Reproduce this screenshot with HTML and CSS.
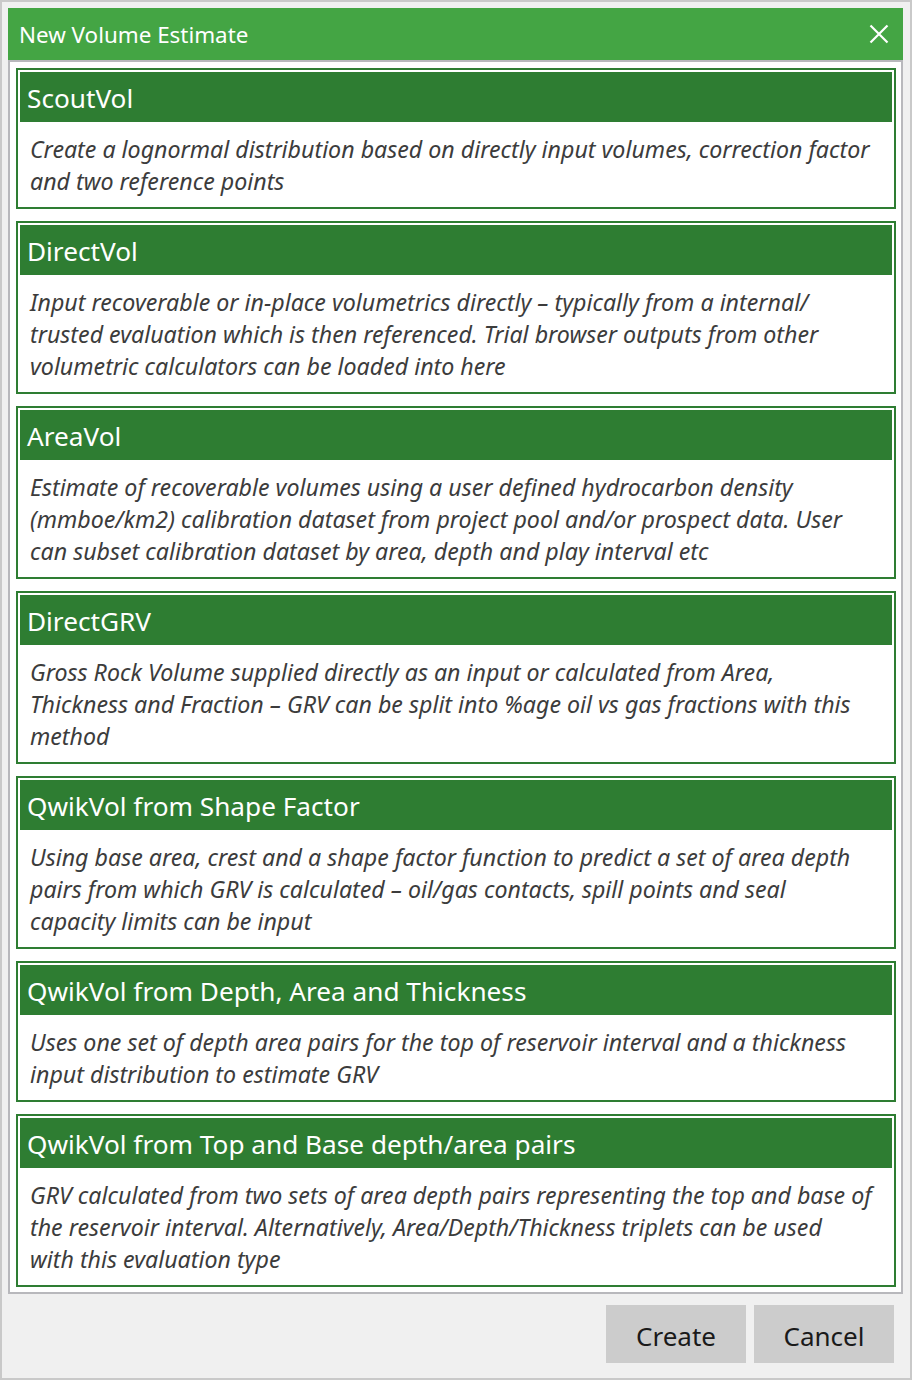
FILE: index.html
```html
<!DOCTYPE html>
<html lang="en">
<head>
<meta charset="utf-8">
<title>New Volume Estimate</title>
<link rel="stylesheet" href="styles.css">
</head>
<body>
<div class="window">
  <div class="titlebar">
    <span class="title">New Volume Estimate</span>
    <button class="close" aria-label="Close">
      <svg width="20" height="20" viewBox="0 0 20 20"><path d="M1.5 1.5 L18.5 18.5 M18.5 1.5 L1.5 18.5" stroke="#fff" stroke-width="2.2" fill="none"/></svg>
    </button>
  </div>
  <div class="panel">
    <div class="card">
      <div class="card-head">ScoutVol</div>
      <div class="card-desc">Create a lognormal distribution based on directly input volumes, correction factor<br>and two reference points</div>
    </div>
    <div class="card">
      <div class="card-head">DirectVol</div>
      <div class="card-desc">Input recoverable or in-place volumetrics directly – typically from a internal/<br>trusted evaluation which is then referenced. Trial browser outputs from other<br>volumetric calculators can be loaded into here</div>
    </div>
    <div class="card">
      <div class="card-head">AreaVol</div>
      <div class="card-desc">Estimate of recoverable volumes using a user defined hydrocarbon density<br>(mmboe/km2) calibration dataset from project pool and/or prospect data. User<br>can subset calibration dataset by area, depth and play interval etc</div>
    </div>
    <div class="card">
      <div class="card-head">DirectGRV</div>
      <div class="card-desc">Gross Rock Volume supplied directly as an input or calculated from Area,<br>Thickness and Fraction – GRV can be split into %age oil vs gas fractions with this<br>method</div>
    </div>
    <div class="card">
      <div class="card-head">QwikVol from Shape Factor</div>
      <div class="card-desc">Using base area, crest and a shape factor function to predict a set of area depth<br>pairs from which GRV is calculated – oil/gas contacts, spill points and seal<br>capacity limits can be input</div>
    </div>
    <div class="card">
      <div class="card-head">QwikVol from Depth, Area and Thickness</div>
      <div class="card-desc">Uses one set of depth area pairs for the top of reservoir interval and a thickness<br>input distribution to estimate GRV</div>
    </div>
    <div class="card">
      <div class="card-head">QwikVol from Top and Base depth/area pairs</div>
      <div class="card-desc">GRV calculated from two sets of area depth pairs representing the top and base of<br>the reservoir interval. Alternatively, Area/Depth/Thickness triplets can be used<br>with this evaluation type</div>
    </div>
  </div>
  <div class="actions">
    <button class="btn">Create</button>
    <button class="btn">Cancel</button>
  </div>
</div>
</body>
</html>
```

FILE: styles.css
```css
html, body {
  margin: 0;
  padding: 0;
  background: #f0f0f0;
}

body {
  font-family: "Noto Sans", "Open Sans", sans-serif;
}

.window {
  box-sizing: border-box;
  width: 912px;
  height: 1380px;
  border: 2px solid #c9c9c9;
  padding: 6px 7px 0 6px;
  background: #f0f0f0;
  display: flex;
  flex-direction: column;
}

.titlebar {
  height: 52px;
  background: #44a544;
  display: flex;
  align-items: center;
  justify-content: space-between;
  padding: 0 14px 0 11px;
  color: #fff;
}

.title {
  font-size: 22.4px;
  line-height: 1;
  padding-top: 2px;
}

.close {
  background: none;
  border: 0;
  padding: 0;
  width: 20px;
  height: 20px;
  display: flex;
  cursor: pointer;
}

.panel {
  border: 2px solid #b8b8bc;
  background: #fff;
  padding: 6px 5px 5px 6px;
  display: flex;
  flex-direction: column;
  gap: 12px;
}

.card {
  border: 2px solid #2e7d32;
  padding: 2px;
  background: #fff;
}

.card-head {
  box-sizing: border-box;
  height: 50px;
  padding: 2px 0 0 7px;
  line-height: 48px;
  background: #2e7d32;
  color: #fff;
  font-size: 26.2px;
  white-space: nowrap;
}

.card-desc {
  padding: 11px 10px 8px 10px;
  font-style: italic;
  font-size: 23.2px;
  line-height: 32px;
  color: #3c3c3c;
  white-space: nowrap;
}

.actions {
  display: flex;
  justify-content: flex-end;
  gap: 8px;
  margin-top: 11px;
  padding-right: 9px;
}

.btn {
  width: 140px;
  height: 58px;
  padding: 3px 0 0 0;
  background: #cccccc;
  border: 0;
  font-family: "Noto Sans", "Open Sans", sans-serif;
  font-size: 26px;
  color: #1a1a1a;
  cursor: pointer;
}
```
